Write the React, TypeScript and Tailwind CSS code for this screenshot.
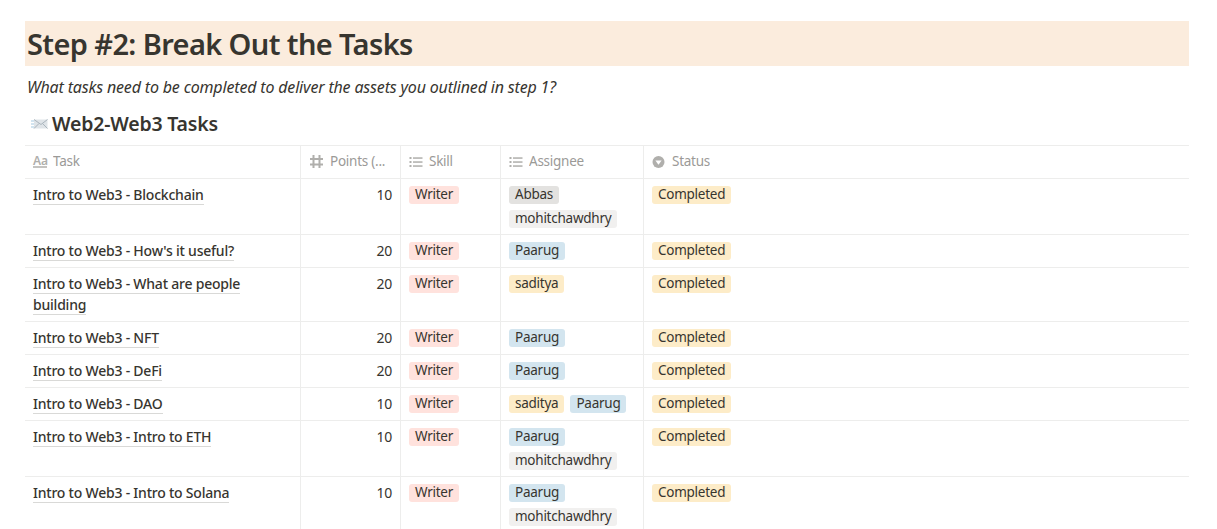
type Tag = { label: string; tone: keyof typeof TONES };

const TONES = {
  red: "bg-[#ffe2dd]",
  gray: "bg-[#e3e2e0]",
  light: "bg-[#f1f0ef]",
  blue: "bg-[#d3e5ef]",
  yellow: "bg-[#fdecc8]",
};

const abbas: Tag = { label: "Abbas", tone: "gray" };
const mohit: Tag = { label: "mohitchawdhry", tone: "light" };
const paarug: Tag = { label: "Paarug", tone: "blue" };
const saditya: Tag = { label: "saditya", tone: "yellow" };

const ROWS: { task: string[]; points: number; people: Tag[]; h: string }[] = [
  { task: ["Intro to Web3 - Blockchain"], points: 10, people: [abbas, mohit], h: "h-[56px]" },
  { task: ["Intro to Web3 - How's it useful?"], points: 20, people: [paarug], h: "h-[33px]" },
  { task: ["Intro to Web3 - What are people", "building"], points: 20, people: [saditya], h: "h-[54px]" },
  { task: ["Intro to Web3 - NFT"], points: 20, people: [paarug], h: "h-[33px]" },
  { task: ["Intro to Web3 - DeFi"], points: 20, people: [paarug], h: "h-[33px]" },
  { task: ["Intro to Web3 - DAO"], points: 10, people: [saditya, paarug], h: "h-[33px]" },
  { task: ["Intro to Web3 - Intro to ETH"], points: 10, people: [paarug, mohit], h: "h-[56px]" },
  { task: ["Intro to Web3 - Intro to Solana"], points: 10, people: [paarug, mohit], h: "h-[56px]" },
];

function Pill({ tag }: { tag: Tag }) {
  return (
    <span className={`inline-flex h-[18px] items-center rounded-[3px] px-[6px] pb-[2px] text-[13.5px] leading-[16px] tracking-[-0.25px] text-[#37352f] ${TONES[tag.tone]}`}>
      {tag.label}
    </span>
  );
}

function Envelope() {
  return (
    <svg width="17" height="14" viewBox="0 0 17 14" className="shrink-0">
      <path d="M0 4h4M0 7h4M0 10h4" stroke="#c4dcec" strokeWidth="1.4" />
      <path d="M3 2.5h13.5v9H3z" fill="#dfe4e8" />
      <path d="M3 2.5l7 5 6.5-5M3 11.5l5-5M16.5 11.5l-5-5" fill="none" stroke="#aab5bd" strokeWidth="1" />
    </svg>
  );
}

function ListIcon() {
  return (
    <svg width="14" height="14" viewBox="0 0 14 14" className="shrink-0" fill="#b0afac">
      <rect x="0.5" y="2" width="2" height="2" />
      <rect x="0.5" y="6" width="2" height="2" />
      <rect x="0.5" y="10" width="2" height="2" />
      <rect x="4" y="2.3" width="9.5" height="1.5" />
      <rect x="4" y="6.3" width="9.5" height="1.5" />
      <rect x="4" y="10.3" width="9.5" height="1.5" />
    </svg>
  );
}

function HashIcon() {
  return (
    <svg width="15" height="15" viewBox="0 0 15 15" className="shrink-0" stroke="#b0afac" strokeWidth="2" fill="none">
      <path d="M4.5 1v13M10.5 1v13M1 5h13M1 10.5h13" />
    </svg>
  );
}

function HeaderCell({ w, icon, label, border = true }: { w: string; icon: React.ReactNode; label: string; border?: boolean }) {
  return (
    <div className={`flex h-full items-center gap-[6px] px-2 pb-[1px] text-[13.5px] tracking-[-0.25px] text-[#9b9a97] ${w} ${border ? "border-r border-[#ededec]" : ""}`}>
      {icon}
      <span className="truncate">{label}</span>
    </div>
  );
}

export default function App() {
  return (
    <div className="h-[529px] overflow-hidden bg-white pl-[25px] pr-[28px] pt-[21px] font-['Noto_Sans',sans-serif] text-[#37352f]">
      <h1 className="flex h-[45px] items-center bg-[#fbecdd] px-[2px] text-[29px] font-semibold leading-[45px] tracking-[-0.62px]">
        Step #2: Break Out the Tasks
      </h1>
      <p className="mt-[9px] h-[24px] px-[2px] text-[16px] italic leading-[24px] tracking-[-0.17px]">
        What tasks need to be completed to deliver the assets you outlined in step 1?
      </p>
      <div className="mb-[9px] mt-[13px] flex h-[24px] items-center gap-[4px] pl-[6px] text-[19.5px] font-semibold tracking-[-0.2px]">
        <Envelope />
        Web2-Web3 Tasks
      </div>

      <div className="flex h-[34px] items-stretch border-b border-t border-[#ededec]">
        <HeaderCell
          w="w-[276px]"
          label="Task"
          icon={
            <span className="w-[14px] shrink-0 border-b-2 border-[#c4c3c0] text-[12px] font-semibold leading-[11px] tracking-[0px] text-[#b0afac]">Aa</span>
          }
        />
        <HeaderCell w="w-[100px]" label="Points (..." icon={<HashIcon />} />
        <HeaderCell w="w-[100px]" label="Skill" icon={<ListIcon />} />
        <HeaderCell w="w-[143px]" label="Assignee" icon={<ListIcon />} />
        <HeaderCell
          w="flex-1"
          label="Status"
          border={false}
          icon={
            <svg width="14" height="14" viewBox="0 0 14 14" className="shrink-0">
              <circle cx="6.5" cy="7" r="6" fill="#b0afac" />
              <path d="M3.4 5.5h6.2L6.5 9.7z" fill="#fff" />
            </svg>
          }
        />
      </div>

      {ROWS.map((row) => (
        <div key={row.task[0]} className={`flex items-stretch border-b border-[#ededec] ${row.h}`}>
          <div className="w-[276px] border-r border-[#ededec] px-2 pt-[5px] text-[14px] font-medium leading-[21px] tracking-[-0.22px]">
            {row.task.map((line) => (
              <div key={line}>
                <span className="border-b border-[#d9d9d7]">{line}</span>
              </div>
            ))}
          </div>
          <div className="w-[100px] border-r border-[#ededec] px-2 pt-[5px] text-right text-[14px] leading-[21px] tracking-[-0.25px]">{row.points}</div>
          <div className="flex w-[100px] items-start border-r border-[#ededec] px-2 pt-[7px]">
            <Pill tag={{ label: "Writer", tone: "red" }} />
          </div>
          <div className="flex w-[143px] flex-wrap content-start gap-[6px] border-r border-[#ededec] px-2 pt-[7px]">
            {row.people.map((p) => (
              <Pill key={p.label} tag={p} />
            ))}
          </div>
          <div className="flex flex-1 items-start px-2 pt-[7px]">
            <Pill tag={{ label: "Completed", tone: "yellow" }} />
          </div>
        </div>
      ))}
    </div>
  );
}
